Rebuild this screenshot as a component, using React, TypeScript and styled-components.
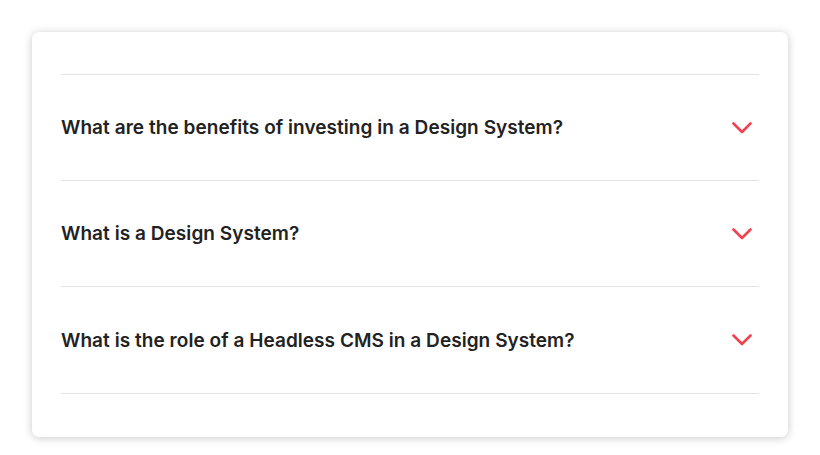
import React from "react";
import styled, { createGlobalStyle } from "styled-components";

const Global = createGlobalStyle`
  html, body { margin: 0; padding: 0; background: #ffffff; }
  body { font-family: Inter, "Open Sans", sans-serif; }
`;

const Page = styled.div`
  padding: 32px 32px 19px 32px;
`;

const Card = styled.section`
  width: 756px;
  box-sizing: border-box;
  background: #fff;
  border-radius: 7px;
  box-shadow: 0 1px 8px rgba(0, 0, 0, 0.22);
  padding: 42px 29px 43px 29px;
`;

const List = styled.div`
  border-top: 1px solid #e3e3e3;
`;

const Item = styled.div`
  height: 105px;
  border-bottom: 1px solid #e3e3e3;
  display: flex;
  align-items: center;
  justify-content: space-between;
  padding-right: 7px;

  &:last-child {
    height: 106px;
  }
`;

const Question = styled.h3`
  margin: 0;
  font-family: Inter, sans-serif;
  font-weight: 600;
  font-size: 19px;
  color: #222222;
  letter-spacing: 0.05px;
`;

const Chevron = () => (
  <svg width="20" height="12" viewBox="0 0 20 12" fill="none">
    <path d="M1.5 1.5 L10 10 L18.5 1.5" stroke="#f3414f" strokeWidth="2.6" strokeLinecap="round" strokeLinejoin="round" />
  </svg>
);

const questions = [
  "What are the benefits of investing in a Design System?",
  "What is a Design System?",
  "What is the role of a Headless CMS in a Design System?",
];

export default function App() {
  return (
    <>
      <Global />
      <Page>
        <Card>
          <List>
            {questions.map((q) => (
              <Item key={q}>
                <Question>{q}</Question>
                <Chevron />
              </Item>
            ))}
          </List>
        </Card>
      </Page>
    </>
  );
}
